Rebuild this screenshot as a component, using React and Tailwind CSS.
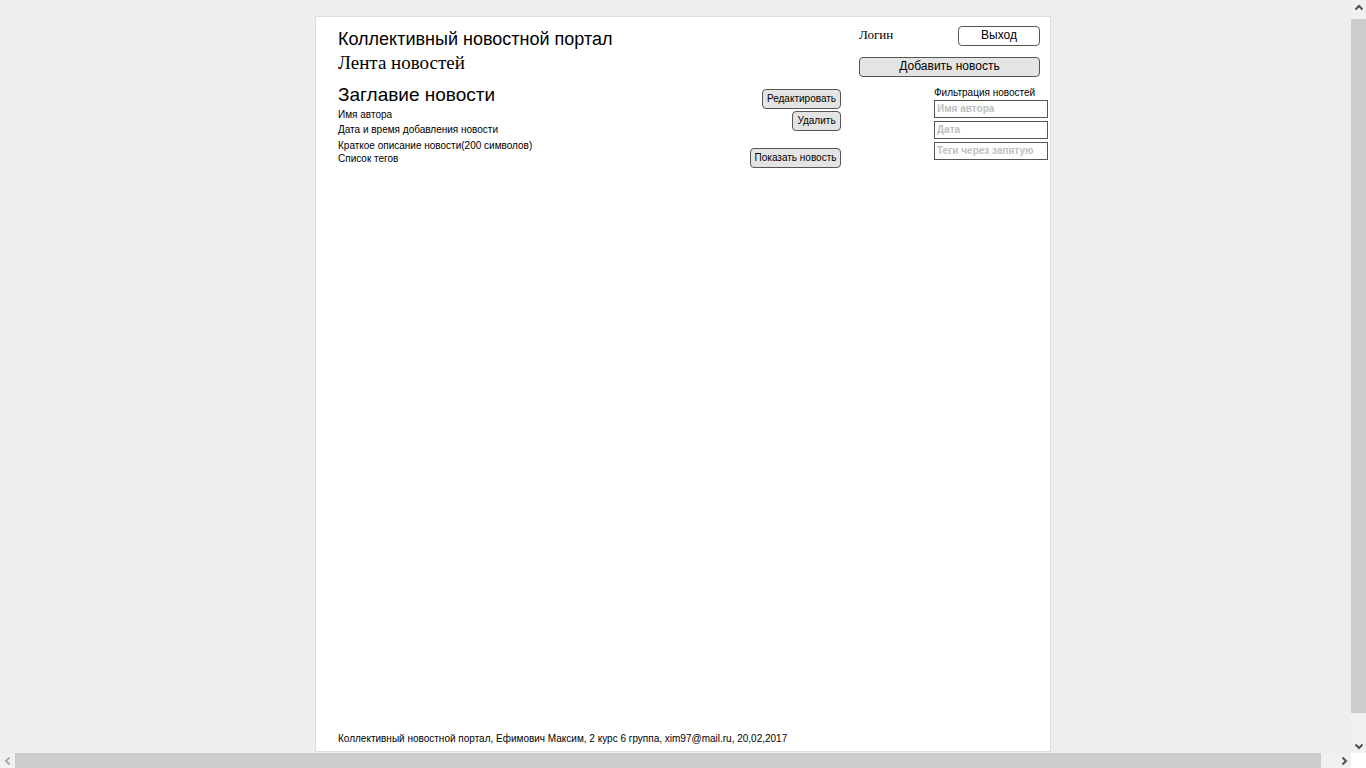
import React from "react";

const buttonBase =
  "flex h-5 items-center justify-center whitespace-nowrap rounded-[4px] border border-[#555555] text-black";
const smallButton = buttonBase + " pb-px bg-[#e4e4e4] text-[10px] leading-[13px]";
const largeButton = buttonBase + " pb-0.5 text-[12px] leading-4";

function Chevron({ direction, muted }) {
  const paths = {
    up: "M0.5 5.5 L4 2 L7.5 5.5",
    down: "M0.5 2.5 L4 6 L7.5 2.5",
    left: "M5.5 0.5 L2 4 L5.5 7.5",
    right: "M2.5 0.5 L6 4 L2.5 7.5",
  };
  return (
    <svg width="8" height="8" viewBox="0 0 8 8" fill="none" aria-hidden="true">
      <path d={paths[direction]} stroke={muted ? "#a8a8a8" : "#505050"} strokeWidth="2" />
    </svg>
  );
}

function ScrollButton({ label, className, ...icon }) {
  return (
    <button type="button" aria-label={label} className={"flex shrink-0 items-center justify-center " + className}>
      <Chevron {...icon} />
    </button>
  );
}

function FilterField({ id, label }) {
  return (
    <div className="flex">
      <input
        id={id}
        type="text"
        aria-label={label}
        placeholder={label}
        className="h-[18px] w-full min-w-0 border border-[#555555] bg-white px-0.5 pb-0.5 text-[10px] leading-[14px] text-black placeholder:font-bold placeholder:text-[#c0c0c0] placeholder:opacity-100"
      />
    </div>
  );
}

function NewsItem() {
  return (
    <article className="mt-2.5 flex justify-between">
      <div className="text-[10px] leading-[13px]">
        <h3 className="mb-0.5 text-[19px] leading-[22px]">Заглавие новости</h3>
        <p className="mb-0.5">Имя автора</p>
        <p className="mb-[3px]">Дата и время добавления новости</p>
        <p>Краткое описание новости(200 символов)</p>
        <p>Список тегов</p>
      </div>
      <div className="flex flex-col items-end pt-[5px]">
        <button type="button" className={smallButton + " w-[79px]"}>Редактировать</button>
        <button type="button" className={smallButton + " mt-0.5 w-[49px]"}>Удалить</button>
        <button type="button" className={smallButton + " mt-[17px] w-[91px]"}>Показать новость</button>
      </div>
    </article>
  );
}

export default function App() {
  return (
    <div className="grid h-screen grid-cols-[1fr_15px] grid-rows-[1fr_15px] bg-[#eeeeee] font-['Liberation_Sans',Arial,sans-serif] text-black">
      <div className="flex min-h-0 min-w-0 justify-center overflow-hidden pt-4 pb-px pl-[15px]">
        <div className="flex w-full max-w-[736px] flex-col border border-[#dddddd] bg-white pt-[9px] pr-0.5 pb-1.5 pl-[22px]">
          <div className="flex flex-1 gap-[18px]">
            <main className="flex-1">
              <h1 className="text-[18px] leading-[26px]">Коллективный новостной портал</h1>
              <h2 className="font-['Liberation_Serif',serif] text-[19px] leading-[22px]">Лента новостей</h2>
              <NewsItem />
            </main>
            <aside className="w-[189px]">
              <div className="flex flex-col gap-[11px] pr-2">
                <div className="flex items-start justify-between">
                  <span className="font-['Liberation_Serif',serif] text-[13px] leading-[18px]">Логин</span>
                  <button type="button" className={largeButton + " w-[82px] bg-white"}>Выход</button>
                </div>
                <button type="button" className={largeButton + " w-full bg-[#e4e4e4]"}>Добавить новость</button>
              </div>
              <form className="mt-[9px] ml-[75px]">
                <fieldset className="flex flex-col gap-[3px]">
                  <legend className="mb-px whitespace-nowrap text-[10px] leading-[13px]">Фильтрация новостей</legend>
                  <FilterField id="author" label="Имя автора" />
                  <FilterField id="date" label="Дата" />
                  <FilterField id="tags" label="Теги через запятую" />
                </fieldset>
              </form>
            </aside>
          </div>
          <footer className="text-[10px] leading-[13px]">
            Коллективный новостной портал, Ефимович Максим, 2 курс 6 группа, xim97@mail.ru, 20,02,2017
          </footer>
        </div>
      </div>
      <div className="flex min-h-0 flex-col bg-[#f0f0f0]">
        <ScrollButton label="Вверх" direction="up" className="h-[19px] pb-1" />
        <div className="grow-[694] bg-[#cccccc]" />
        <div className="grow-[25]" />
        <ScrollButton label="Вниз" direction="down" className="h-[15px]" />
      </div>
      <div className="flex min-w-0 bg-[#f0f0f0]">
        <ScrollButton label="Влево" direction="left" muted className="w-[15px]" />
        <div className="grow-[1306] bg-[#cccccc]" />
        <div className="grow-[15]" />
        <ScrollButton label="Вправо" direction="right" className="w-[15px]" />
      </div>
      <div className="bg-white" />
    </div>
  );
}
